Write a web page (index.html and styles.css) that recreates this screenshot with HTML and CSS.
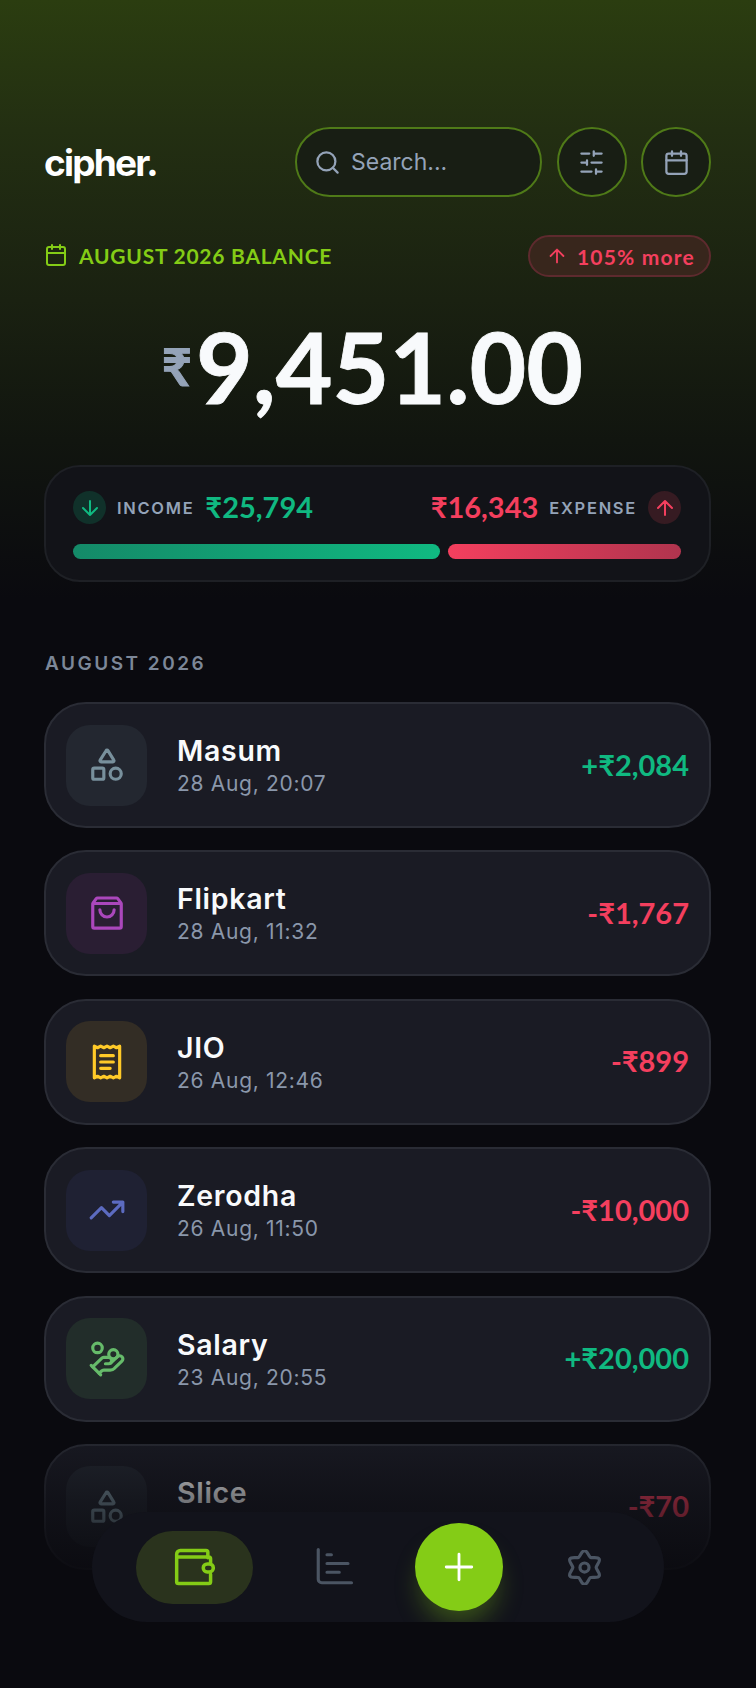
FILE: index.html
```html
<!DOCTYPE html>
<html lang="en">
  <head>
    <meta charset="utf-8" />
    <title>cipher.</title>
    <link rel="stylesheet" href="styles.css">
  </head>
  <body>
    <div class="app">
      <header class="top-bar">
        <div class="logo">cipher.</div>
        <div class="top-actions">
          <div class="search-box">
            <svg class="icon" viewBox="0 0 24 24"><circle cx="11" cy="11" r="8"/><path d="m21 21-4.3-4.3"/></svg>
            <span>Search...</span>
          </div>
          <div class="round-btn">
            <svg class="icon" viewBox="0 0 24 24"><path d="M21 4h-7M10 4H3M21 12h-9M8 12H3M21 20h-5M12 20H3M14 2v4M8 10v4M16 18v4"/></svg>
          </div>
          <div class="round-btn">
            <svg class="icon" viewBox="0 0 24 24"><path d="M8 2v4M16 2v4M3 10h18"/><rect x="3" y="4" width="18" height="18" rx="2"/></svg>
          </div>
        </div>
      </header>

      <div class="balance-row">
        <div class="balance-label">
          <svg class="icon" viewBox="0 0 24 24"><path d="M8 2v4M16 2v4M3 10h18"/><rect x="3" y="4" width="18" height="18" rx="2"/></svg>
          <span>AUGUST 2026 BALANCE</span>
        </div>
        <div class="trend-badge">
          <svg class="icon" viewBox="0 0 24 24"><path d="m5 12 7-7 7 7M12 19V5"/></svg>
          <span>105% more</span>
        </div>
      </div>

      <div class="balance">
        <span class="balance-symbol">₹</span><span class="balance-value">9,451.00</span>
      </div>

      <section class="summary">
        <div class="summary-top">
          <div class="summary-side">
            <span class="summary-dot dot-in">
              <svg class="icon" viewBox="0 0 24 24"><path d="M12 5v14M19 12l-7 7-7-7"/></svg>
            </span>
            <span class="summary-label">INCOME</span>
            <span class="summary-amount text-in">₹25,794</span>
          </div>
          <div class="summary-side">
            <span class="summary-amount text-out">₹16,343</span>
            <span class="summary-label">EXPENSE</span>
            <span class="summary-dot dot-out">
              <svg class="icon" viewBox="0 0 24 24"><path d="m5 12 7-7 7 7M12 19V5"/></svg>
            </span>
          </div>
        </div>
        <div class="summary-bars">
          <div class="bar bar-in" style="flex: 25794"></div>
          <div class="bar bar-out" style="flex: 16343"></div>
        </div>
      </section>

      <h2 class="month-title">AUGUST 2026</h2>

      <div class="tx-list">
        <div class="tx-card">
          <div class="tx-icon tone-grey">
            <svg class="icon" viewBox="0 0 24 24"><path d="M8.3 10a.7.7 0 0 1-.626-1.079L11.4 3a.7.7 0 0 1 1.198-.043L16.3 8.9a.7.7 0 0 1-.572 1.1Z"/><rect x="3" y="14" width="7" height="7" rx="1"/><circle cx="17.5" cy="17.5" r="3.5"/></svg>
          </div>
          <div class="tx-info">
            <div class="tx-name">Masum</div>
            <div class="tx-date">28 Aug, 20:07</div>
          </div>
          <div class="tx-amount text-in">+₹2,084</div>
        </div>

        <div class="tx-card">
          <div class="tx-icon tone-purple">
            <svg class="icon" viewBox="0 0 24 24"><path d="M6 2.500h12a1 1 0 0 1 .8.4l2 2.700a1 1 0 0 1 .2.6V20.500a1 1 0 0 1-1 1H4a1 1 0 0 1-1-1V6.200a1 1 0 0 1 .2-.6l2-2.700a1 1 0 0 1 .8-.4ZM3.200 6h17.600M16.500 10a4.500 4.500 0 0 1-9 0"/></svg>
          </div>
          <div class="tx-info">
            <div class="tx-name">Flipkart</div>
            <div class="tx-date">28 Aug, 11:32</div>
          </div>
          <div class="tx-amount text-out">-₹1,767</div>
        </div>

        <div class="tx-card">
          <div class="tx-icon tone-yellow">
            <svg class="icon" viewBox="0 0 24 24"><path d="M4 2v20l2-1 2 1 2-1 2 1 2-1 2 1 2-1 2 1V2l-2 1-2-1-2 1-2-1-2 1-2-1-2 1ZM16 8H8M16 12H8M14 16H8"/></svg>
          </div>
          <div class="tx-info">
            <div class="tx-name">JIO</div>
            <div class="tx-date">26 Aug, 12:46</div>
          </div>
          <div class="tx-amount text-out">-₹899</div>
        </div>

        <div class="tx-card">
          <div class="tx-icon tone-indigo">
            <svg class="icon" viewBox="0 0 24 24"><path d="M22 7l-8.500 8.500-5-5L2 17M16 7h6v6"/></svg>
          </div>
          <div class="tx-info">
            <div class="tx-name">Zerodha</div>
            <div class="tx-date">26 Aug, 11:50</div>
          </div>
          <div class="tx-amount text-out">-₹10,000</div>
        </div>

        <div class="tx-card">
          <div class="tx-icon tone-green">
            <svg class="icon" viewBox="0 0 24 24"><path d="M11 15h2a2 2 0 1 0 0-4h-3c-.6 0-1.100.2-1.400.6L3 17"/><path d="m7 21 1.600-1.400c.3-.4.8-.6 1.400-.6h4c1.100 0 2.100-.4 2.800-1.200l4.600-4.400a2 2 0 0 0-2.750-2.910l-4.200 3.900"/><path d="m2 16 6 6"/><circle cx="16" cy="9" r="2.900"/><circle cx="6" cy="5" r="3"/></svg>
          </div>
          <div class="tx-info">
            <div class="tx-name">Salary</div>
            <div class="tx-date">23 Aug, 20:55</div>
          </div>
          <div class="tx-amount text-in">+₹20,000</div>
        </div>

        <div class="tx-card">
          <div class="tx-icon tone-grey">
            <svg class="icon" viewBox="0 0 24 24"><path d="M8.3 10a.7.7 0 0 1-.626-1.079L11.4 3a.7.7 0 0 1 1.198-.043L16.3 8.9a.7.7 0 0 1-.572 1.1Z"/><rect x="3" y="14" width="7" height="7" rx="1"/><circle cx="17.5" cy="17.5" r="3.5"/></svg>
          </div>
          <div class="tx-info">
            <div class="tx-name">Slice</div>
            <div class="tx-date">22 Aug, 18:20</div>
          </div>
          <div class="tx-amount text-out">-₹70</div>
        </div>
      </div>

      <div class="bottom-fade"></div>

      <nav class="dock">
        <div class="dock-item dock-active">
          <svg class="icon icon-wallet" viewBox="0 0 24 24"><path d="M19 7V4a1 1 0 0 0-1-1H4a2 2 0 0 0-2 2v15a1 1 0 0 0 1 1h16.500a1 1 0 0 0 1-1v-4M2 6.500h17.500a1 1 0 0 1 1 1V10"/><rect x="16.500" y="10.300" width="5.500" height="4.400" rx="2.200"/></svg>
        </div>
        <div class="dock-item">
          <svg class="icon icon-chart" viewBox="0 0 24 24"><path d="M3 2v17a2 2 0 0 0 2 2h17M8 5h2.500M8 10h12M8 15h7"/></svg>
        </div>
        <div class="dock-add">
          <svg class="icon" viewBox="0 0 24 24"><path d="M12 3v18M3 12h18"/></svg>
        </div>
        <div class="dock-item">
          <svg class="icon icon-gear" viewBox="0 0 24 24"><path d="M12 .4C14 .4 14.790 4.370 16 5.070 17.210 5.770 21.050 4.470 22.050 6.200 23.050 7.930 20 10.600 20 12 20 13.400 23.050 16.070 22.050 17.800 21.050 19.530 17.210 18.230 16 18.930 14.790 19.630 14 23.600 12 23.600 10 23.600 9.210 19.630 8 18.930 6.790 18.230 2.950 19.530 1.950 17.800 .95 16.070 4 13.400 4 12 4 10.600 .95 7.930 1.950 6.200 2.950 4.470 6.790 5.770 8 5.070 9.210 4.370 10 .4 12 .4Z"/><circle cx="12" cy="12" r="3.100"/></svg>
        </div>
      </nav>
    </div>
  </body>
</html>
```

FILE: styles.css
```css
* {
  box-sizing: border-box;
}

body {
  margin: 0;
  background-color: #0a0a0f;
  font-family: "Inter", "Noto Sans", sans-serif;
  color: #f8fafc;
}

.app {
  position: relative;
  height: 1688px;
  overflow: hidden;
  padding: 127px 45px 0 44px;
  background: linear-gradient(180deg, #2b3d10 0px, #232f12 130px, #1a2111 300px, #11150f 440px, #0a0a0f 600px);
}

.icon {
  display: block;
  fill: none;
  stroke: currentColor;
  stroke-width: 2;
  stroke-linecap: round;
  stroke-linejoin: round;
}

.top-bar {
  display: flex;
  justify-content: space-between;
  align-items: center;
}

.logo {
  font-size: 37px;
  font-weight: 700;
  letter-spacing: -1.8px;
  color: #fff;
}

.top-actions {
  display: flex;
  gap: 14.500px;
}

.search-box {
  display: flex;
  align-items: center;
  gap: 10px;
  width: 247px;
  height: 70px;
  padding: 0 17px;
  border: 2px solid #4f7a18;
  border-radius: 35px;
  background-color: #181e14;
  color: #94a3b8;
  font-size: 23px;
}

.search-box .icon,
.round-btn .icon {
  width: 27px;
  height: 27px;
}

.round-btn {
  display: flex;
  justify-content: center;
  align-items: center;
  width: 70px;
  height: 70px;
  border: 2px solid #4f7a18;
  border-radius: 50%;
  background-color: #181e14;
  color: #94a3b8;
}

.balance-row {
  display: flex;
  justify-content: space-between;
  align-items: center;
  margin-top: 38px;
}

.balance-label {
  display: flex;
  align-items: center;
  gap: 11px;
  margin-top: -2px;
  color: #84cc16;
  font-family: "Lato", sans-serif;
  font-size: 21px;
  font-weight: 700;
  letter-spacing: 0.750px;
}

.balance-label .icon {
  width: 24px;
  height: 24px;
}

.trend-badge {
  display: flex;
  align-items: center;
  gap: 9px;
  height: 42px;
  padding: 0 14px 0 16px;
  border: 2px solid #5e2a2e;
  border-radius: 21px;
  background-color: #38261c;
  color: #f43f5e;
  font-family: "Lato", sans-serif;
  font-size: 21px;
  font-weight: 700;
  letter-spacing: 1.2px;
}

.trend-badge .icon {
  width: 22px;
  height: 22px;
}

.balance {
  display: flex;
  justify-content: center;
  align-items: flex-start;
  margin-top: 30px;
  padding-right: 10px;
  font-family: "Lato", sans-serif;
}

.balance-value {
  font-size: 98px;
  font-weight: 700;
  line-height: 118px;
  color: #f8fafc;
  -webkit-text-stroke: 0.800px #f8fafc;
}

.balance-symbol {
  font-size: 52px;
  font-weight: 700;
  line-height: 118px;
  color: #94a3b8;
  -webkit-text-stroke: 1px #94a3b8;
  margin-right: 4px;
}

.summary {
  margin-top: 40px;
  height: 117px;
  padding: 24px 28px 0 27px;
  border: 2px solid #1e2025;
  border-radius: 36px;
  background-color: #121318;
}

.summary-top {
  display: flex;
  justify-content: space-between;
  align-items: center;
  height: 33px;
}

.summary-side {
  display: flex;
  align-items: center;
  gap: 11px;
}

.summary-dot {
  display: flex;
  justify-content: center;
  align-items: center;
  width: 33px;
  height: 33px;
  border-radius: 50%;
}

.summary-dot .icon {
  width: 24px;
  height: 24px;
}

.dot-in {
  background-color: #10312a;
  color: #10b981;
}

.dot-out {
  background-color: #361b22;
  color: #f43f5e;
}

.summary-label {
  color: #94a3b8;
  font-size: 16.500px;
  font-weight: 600;
  letter-spacing: 1.700px;
}

.summary-amount {
  margin-top: -2px;
  font-family: "Lato", sans-serif;
  font-size: 29px;
  font-weight: 700;
  line-height: 33px;
}

.text-in {
  color: #10b981;
}

.text-out {
  color: #f43f5e;
}

.summary-bars {
  display: flex;
  gap: 8px;
  margin-top: 20px;
}

.bar {
  height: 15px;
  border-radius: 8px;
}

.bar-in {
  background: linear-gradient(90deg, #148a68, #10b981);
}

.bar-out {
  background: linear-gradient(90deg, #f43f5e, #b0344e);
}

.month-title {
  margin: 70px 0 0 1px;
  color: #7c8798;
  font-size: 19px;
  line-height: 23px;
  font-weight: 600;
  letter-spacing: 2.500px;
}

.tx-list {
  display: flex;
  flex-direction: column;
  gap: 22.400px;
  margin-top: 27px;
}

.tx-card {
  display: flex;
  align-items: center;
  flex: none;
  height: 126px;
  padding: 0 20px;
  border: 2px solid #2a2c35;
  border-radius: 42px;
  background-color: #1a1b24;
}

.tx-icon {
  display: flex;
  justify-content: center;
  align-items: center;
  flex: none;
  width: 81px;
  height: 81px;
  border-radius: 24px;
}

.tx-icon .icon {
  width: 38px;
  height: 38px;
}

.tone-grey {
  background-color: #232730;
  color: #78909c;
}

.tone-purple {
  background-color: #2a1e33;
  color: #ab47bc;
}

.tone-yellow {
  background-color: #332d25;
  color: #ffca28;
}

.tone-indigo {
  background-color: #1f2133;
  color: #5c6bc0;
}

.tone-green {
  background-color: #222d2a;
  color: #66bb6a;
}

.tx-info {
  flex: 1;
  margin-left: 30px;
  padding-top: 1px;
}

.tx-name {
  color: #f8fafc;
  font-size: 28.500px;
  font-weight: 600;
  line-height: 33px;
  letter-spacing: 0.700px;
}

.tx-date {
  margin-top: 4px;
  color: #8a97ab;
  font-size: 21px;
  line-height: 26px;
  letter-spacing: 0.700px;
}

.tx-amount {
  margin-top: -2px;
  font-family: "Lato", sans-serif;
  font-size: 29px;
  font-weight: 700;
}

.bottom-fade {
  position: absolute;
  left: 0;
  right: 0;
  bottom: 0;
  height: 268px;
  background: linear-gradient(180deg, rgba(10, 10, 15, 0) 0%, rgba(10, 10, 15, 0.55) 30%, rgba(10, 10, 15, 0.9) 55%, #0a0a0f 70%);
}

.dock {
  position: absolute;
  left: 92px;
  top: 1512px;
  display: flex;
  align-items: center;
  gap: 22.500px;
  width: 572px;
  height: 110px;
  padding: 0 44px;
  overflow: hidden;
  border-radius: 55px;
  background-color: #12131b;
}

.dock-item {
  display: flex;
  justify-content: center;
  align-items: center;
  flex: none;
  width: 117px;
  height: 73px;
  border-radius: 37px;
  color: #4b5563;
}

.icon-wallet {
  width: 44px;
  height: 44px;
  stroke-width: 1.900;
}

.icon-chart {
  width: 42px;
  height: 42px;
  stroke-width: 1.800;
}

.icon-gear {
  width: 35px;
  height: 35px;
  stroke-width: 2.200;
}

.dock-active {
  background-color: #2a331d;
  color: #84cc16;
}

.dock-add {
  display: flex;
  justify-content: center;
  align-items: center;
  flex: none;
  width: 88px;
  height: 88px;
  border-radius: 50%;
  background-color: #84cc16;
  box-shadow: 0 18px 26px -6px rgba(132, 204, 22, 0.35);
  color: #fff;
}

.dock-add .icon {
  width: 34px;
  height: 34px;
}
```
